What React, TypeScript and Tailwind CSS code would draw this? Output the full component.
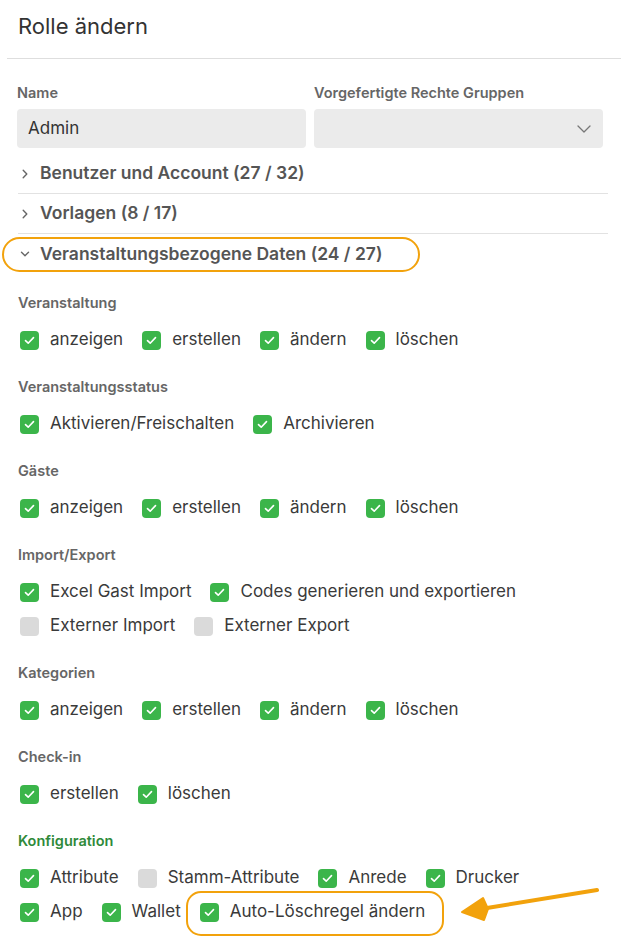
import React from "react";

type Perm = { label: string; on: boolean };

const groups: { title: string; rows: Perm[][] }[] = [
  {
    title: "Veranstaltung",
    rows: [
      [
        { label: "anzeigen", on: true },
        { label: "erstellen", on: true },
        { label: "ändern", on: true },
        { label: "löschen", on: true },
      ],
    ],
  },
  {
    title: "Veranstaltungsstatus",
    rows: [
      [
        { label: "Aktivieren/Freischalten", on: true },
        { label: "Archivieren", on: true },
      ],
    ],
  },
  {
    title: "Gäste",
    rows: [
      [
        { label: "anzeigen", on: true },
        { label: "erstellen", on: true },
        { label: "ändern", on: true },
        { label: "löschen", on: true },
      ],
    ],
  },
  {
    title: "Import/Export",
    rows: [
      [
        { label: "Excel Gast Import", on: true },
        { label: "Codes generieren und exportieren", on: true },
      ],
      [
        { label: "Externer Import", on: false },
        { label: "Externer Export", on: false },
      ],
    ],
  },
  {
    title: "Kategorien",
    rows: [
      [
        { label: "anzeigen", on: true },
        { label: "erstellen", on: true },
        { label: "ändern", on: true },
        { label: "löschen", on: true },
      ],
    ],
  },
  {
    title: "Check-in",
    rows: [
      [
        { label: "erstellen", on: true },
        { label: "löschen", on: true },
      ],
    ],
  },
];

const Checkbox = ({ on }: { on: boolean }) => (
  <span
    className={`w-[19px] h-[19px] rounded-[4px] flex items-center justify-center shrink-0 ${
      on ? "bg-[#3bb54a]" : "bg-[#dadada]"
    }`}
  >
    {on && (
      <svg width="11" height="9" viewBox="0 0 11 9" fill="none">
        <path d="M1.5 4.6 L4.2 7.2 L9.5 1.6" stroke="white" strokeWidth="1.6" strokeLinecap="round" strokeLinejoin="round" />
      </svg>
    )}
  </span>
);

const Item = ({ label, on }: Perm) => (
  <div className="flex items-center gap-[11px] mr-[19px]">
    <Checkbox on={on} />
    <span className="text-[17px] text-[#3a3a3a]">{label}</span>
  </div>
);

const Chevron = ({ open }: { open?: boolean }) => (
  <svg width="10" height="10" viewBox="0 0 10 10" fill="none" className="shrink-0">
    {open ? (
      <path d="M1.5 3.2 L5 6.7 L8.5 3.2" stroke="#666" strokeWidth="1.4" strokeLinecap="round" strokeLinejoin="round" />
    ) : (
      <path d="M3.2 1.3 L6.8 5 L3.2 8.7" stroke="#666" strokeWidth="1.4" strokeLinecap="round" strokeLinejoin="round" />
    )}
  </svg>
);

const AccordionRow = ({ title, open, last }: { title: string; open?: boolean; last?: boolean }) => (
  <div className={`h-[40px] flex items-center gap-[10px] pl-[2px] ${last ? "" : "border-b border-[#e2e2e2]"}`}>
    <Chevron open={open} />
    <span className="text-[17.5px] font-semibold text-[#555]">{title}</span>
  </div>
);

export default function App() {
  return (
    <div
      className="relative w-[621px] h-[941px] bg-white overflow-hidden"
      style={{ fontFamily: "Inter, 'Noto Sans', sans-serif" }}
    >
      <div className="ml-[7px] h-[59px] border-b border-[#dedede] flex items-center pl-[11px] pb-[6px]">
        <h1 className="text-[22px] text-[#333] font-normal">Rolle ändern</h1>
      </div>

      <div className="pl-[17px] pr-[18px]">
        <div className="grid grid-cols-2 gap-[8px] pt-[25px]">
          <div>
            <div className="h-[17px] text-[14.5px] font-semibold text-[#666] mb-[8px] leading-[17px]">Name</div>
            <div className="h-[39px] rounded-[4px] bg-[#ebebeb] flex items-center px-[11px] text-[17px] text-[#333]">
              Admin
            </div>
          </div>
          <div>
            <div className="h-[17px] text-[14.5px] font-semibold text-[#666] mb-[8px] leading-[17px]">
              Vorgefertigte Rechte Gruppen
            </div>
            <div className="h-[39px] rounded-[4px] bg-[#ebebeb] flex items-center justify-end pr-[12px]">
              <svg width="14" height="8" viewBox="0 0 14 8" fill="none">
                <path d="M1 1 L7 7 L13 1" stroke="#777" strokeWidth="1.3" strokeLinecap="round" strokeLinejoin="round" />
              </svg>
            </div>
          </div>
        </div>

        <div className="mt-[5px] pt-[1px] pl-[1px] w-[591px]">
          <AccordionRow title="Benutzer und Account (27 / 32)" />
          <AccordionRow title="Vorlagen (8 / 17)" />
          <AccordionRow title="Veranstaltungsbezogene Daten (24 / 27)" open last />
        </div>

        <div className="pt-[19px] pl-[1px]">
          {groups.map((g) => (
            <div key={g.title} className="mb-[20px]">
              <div className="h-[20px] flex items-center text-[14.5px] font-semibold text-[#666] mb-[10px]">
                {g.title}
              </div>
              {g.rows.map((row, i) => (
                <div key={i} className="h-[34px] flex items-center pl-[2px]">
                  {row.map((p, j) => (
                    <Item key={j} {...p} />
                  ))}
                </div>
              ))}
            </div>
          ))}

          <div>
            <div className="h-[20px] flex items-center text-[14.5px] font-semibold text-[#2f8a3a] mb-[10px]">
              Konfiguration
            </div>
            <div className="h-[34px] flex items-center pl-[2px]">
              <Item label="Attribute" on />
              <Item label="Stamm-Attribute" on={false} />
              <Item label="Anrede" on />
              <Item label="Drucker" on />
            </div>
            <div className="h-[34px] flex items-center pl-[2px]">
              <Item label="App" on />
              <Item label="Wallet" on />
              <Item label="Auto-Löschregel ändern" on />
            </div>
          </div>
        </div>
      </div>

      {/* annotations */}
      <div className="absolute left-[2px] top-[237px] w-[418px] h-[35px] rounded-full border-[2.5px] border-[#f2a20c]" />
      <div className="absolute left-[186px] top-[891px] w-[258px] h-[45px] rounded-[15px] border-[2.5px] border-[#f2a20c]" />
      <svg className="absolute left-[455px] top-[880px]" width="150" height="45" viewBox="0 0 150 45" fill="none">
        <path d="M142 10 L32 28" stroke="#f2a20c" strokeWidth="4" strokeLinecap="round" />
        <path d="M7 32 L28 18 L33 29 L29 40 Z" fill="#f2a20c" stroke="#f2a20c" strokeWidth="2" strokeLinejoin="round" />
      </svg>
    </div>
  );
}
